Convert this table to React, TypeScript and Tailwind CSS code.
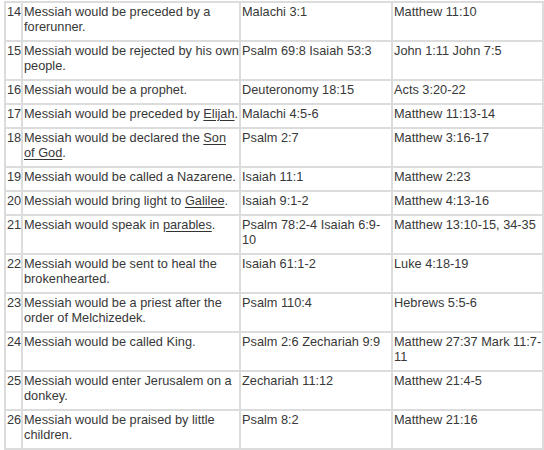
import React from 'react';

type Part = string | { link: string };

interface Prophecy {
  n: number;
  text: Part[];
  ot: string;
  nt: string;
}

const rows: Prophecy[] = [
  { n: 14, text: ['Messiah would be preceded by a forerunner.'], ot: 'Malachi 3:1', nt: 'Matthew 11:10' },
  { n: 15, text: ['Messiah would be rejected by his own people.'], ot: 'Psalm 69:8 Isaiah 53:3', nt: 'John 1:11 John 7:5' },
  { n: 16, text: ['Messiah would be a prophet.'], ot: 'Deuteronomy 18:15', nt: 'Acts 3:20-22' },
  { n: 17, text: ['Messiah would be preceded by ', { link: 'Elijah' }, '.'], ot: 'Malachi 4:5-6', nt: 'Matthew 11:13-14' },
  { n: 18, text: ['Messiah would be declared the ', { link: 'Son of God' }, '.'], ot: 'Psalm 2:7', nt: 'Matthew 3:16-17' },
  { n: 19, text: ['Messiah would be called a Nazarene.'], ot: 'Isaiah 11:1', nt: 'Matthew 2:23' },
  { n: 20, text: ['Messiah would bring light to ', { link: 'Galilee' }, '.'], ot: 'Isaiah 9:1-2', nt: 'Matthew 4:13-16' },
  { n: 21, text: ['Messiah would speak in ', { link: 'parables' }, '.'], ot: 'Psalm 78:2-4 Isaiah 6:9-10', nt: 'Matthew 13:10-15, 34-35' },
  { n: 22, text: ['Messiah would be sent to heal the brokenhearted.'], ot: 'Isaiah 61:1-2', nt: 'Luke 4:18-19' },
  { n: 23, text: ['Messiah would be a priest after the order of Melchizedek.'], ot: 'Psalm 110:4', nt: 'Hebrews 5:5-6' },
  { n: 24, text: ['Messiah would be called King.'], ot: 'Psalm 2:6 Zechariah 9:9', nt: 'Matthew 27:37 Mark 11:7-11' },
  { n: 25, text: ['Messiah would enter Jerusalem on a donkey.'], ot: 'Zechariah 11:12', nt: 'Matthew 21:4-5' },
  { n: 26, text: ['Messiah would be praised by little children.'], ot: 'Psalm 8:2', nt: 'Matthew 21:16' },
];

const cell = 'border-2 border-[#dcdcdc] pl-[1px] pr-0 pt-[1px] pb-[6px] align-top text-left font-normal';

const App: React.FC = () => {
  return (
    <div className="w-[544px] h-[450px] overflow-hidden bg-white font-['Liberation_Sans',Arial,sans-serif] text-[12.75px] leading-[15px] text-[#383838]">
      <table className="ml-[4px] mt-[1px] w-[540px] table-fixed border-collapse">
        <colgroup>
          <col className="w-[17px]" />
          <col className="w-[218px]" />
          <col className="w-[152px]" />
          <col className="w-[151px]" />
        </colgroup>
        <tbody>
          {rows.map((row) => (
            <tr key={row.n}>
              <td className={cell}>{row.n}</td>
              <td className={cell}>
                {row.text.map((part, i) =>
                  typeof part === 'string' ? (
                    <React.Fragment key={i}>{part}</React.Fragment>
                  ) : (
                    <a key={i} className="underline decoration-[#333] underline-offset-2">
                      {part.link}
                    </a>
                  )
                )}
              </td>
              <td className={cell}>{row.ot}</td>
              <td className={cell}>{row.nt}</td>
            </tr>
          ))}
        </tbody>
      </table>
    </div>
  );
};

export default App;
